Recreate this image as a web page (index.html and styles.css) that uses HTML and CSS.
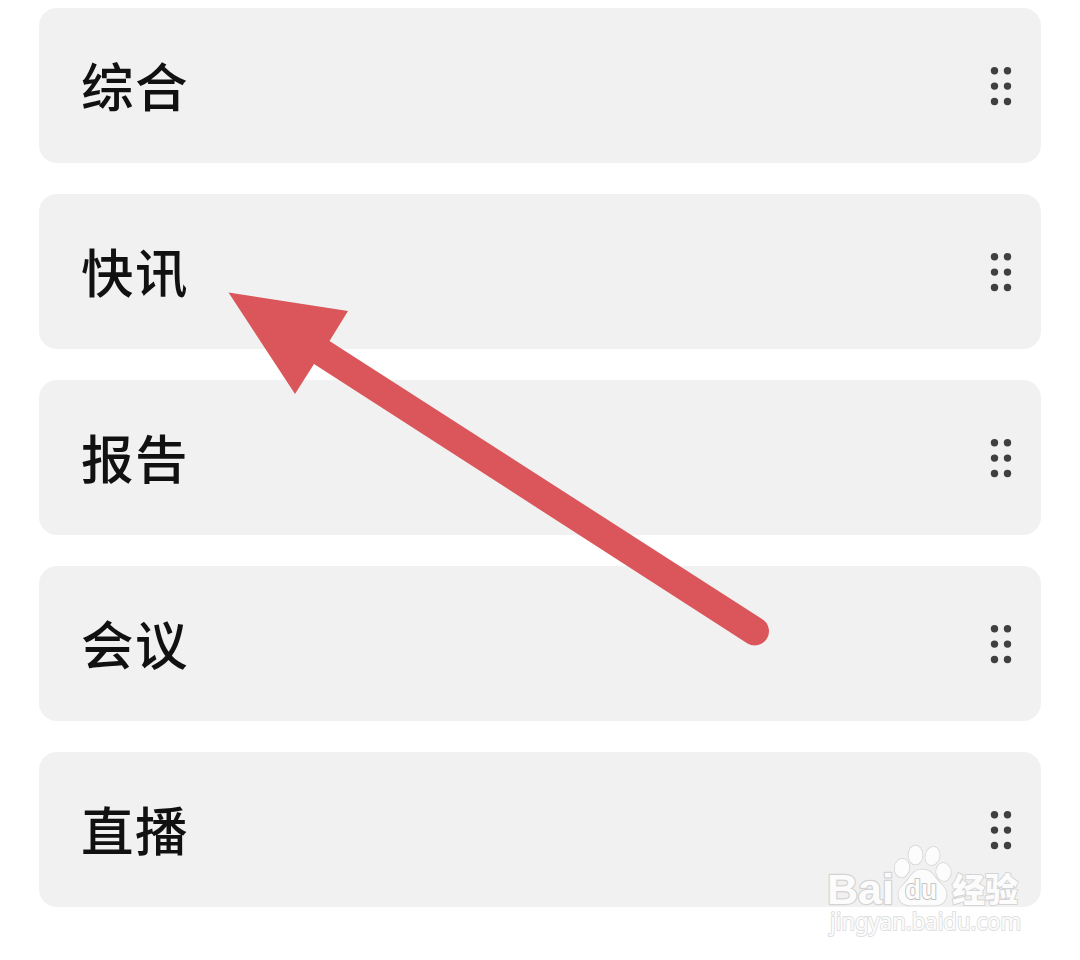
FILE: index.html
```html
<!DOCTYPE html>
<html lang="zh-CN">
<head>
<meta charset="utf-8">
<title>栏目排序</title>
<link rel="stylesheet" href="styles.css">
</head>
<body>
<svg width="0" height="0" class="defs" aria-hidden="true">
  <symbol id="grip" viewBox="0 0 22 40">
    <circle cx="4.500" cy="4.700" r="3.700"/><circle cx="17.500" cy="4.700" r="3.700"/>
    <circle cx="4.500" cy="20.100" r="3.700"/><circle cx="17.500" cy="20.100" r="3.700"/>
    <circle cx="4.500" cy="35.500" r="3.700"/><circle cx="17.500" cy="35.500" r="3.700"/>
  </symbol>
</svg>
<main class="list">
  <div class="card"><span class="label">综合</span><svg class="handle"><use href="#grip"/></svg></div>
  <div class="card"><span class="label">快讯</span><svg class="handle"><use href="#grip"/></svg></div>
  <div class="card"><span class="label">报告</span><svg class="handle"><use href="#grip"/></svg></div>
  <div class="card"><span class="label">会议</span><svg class="handle"><use href="#grip"/></svg></div>
  <div class="card"><span class="label">直播</span><svg class="handle"><use href="#grip"/></svg></div>
</main>
<svg class="arrow" viewBox="0 0 1080 960" aria-hidden="true">
  <path d="M228.500 292.500 L348 311 L329.500 341 L762 619 A14 14 0 0 1 747.500 643.500 L314 364 L295 394 Z"/>
</svg>
<svg class="watermark" viewBox="815 835 220 110" aria-hidden="true">
  <text class="brand" x="827" y="904" textLength="67" lengthAdjust="spacingAndGlyphs">Bai</text>
  <g class="paw">
    <ellipse cx="902" cy="868" rx="7.300" ry="9.300" transform="rotate(8 902 868)"/>
    <ellipse cx="915.500" cy="855" rx="7" ry="9.500"/>
    <ellipse cx="932.500" cy="856" rx="7" ry="9.300" transform="rotate(14 932.500 856)"/>
    <ellipse cx="943.500" cy="872" rx="7.300" ry="9" transform="rotate(-8 943.500 872)"/>
    <path d="M922 869.500 C915 869.500 912 874 908.500 879 C905 884 898.500 887 898.500 895 C898.500 902 904 905.500 911 905.500 L934 905.500 C942 905.500 946.500 901 946.500 894 C946.500 887 940 884 936.500 879 C933 874 930 869.500 922 869.500 Z"/>
  </g>
  <text class="du" x="905" y="899" textLength="32" lengthAdjust="spacingAndGlyphs">du</text>
  <text class="exp" x="952" y="902" textLength="66" lengthAdjust="spacingAndGlyphs">经验</text>
  <text class="url" x="830" y="930" textLength="191" lengthAdjust="spacingAndGlyphs">jingyan.baidu.com</text>
</svg>
</body>
</html>
```
FILE: styles.css
```css
body {
  margin: 0;
  position: relative;
  width: 1080px;
  height: 960px;
  overflow: hidden;
  background: #fff;
  font-family: "Noto Sans CJK SC", sans-serif;
}
.defs {
  display: none;
}
.list {
  display: flex;
  flex-direction: column;
  gap: 31px;
  padding: 8px 39px 0;
}
.card {
  box-sizing: border-box;
  display: flex;
  align-items: center;
  justify-content: space-between;
  height: 155px;
  padding: 0 29px 0 42px;
  border-radius: 18px;
  background: #f1f1f1;
}
.label {
  padding-bottom: 3px;
  font-size: 52.500px;
  line-height: 80px;
  letter-spacing: 1.500px;
  font-weight: 500;
  color: #111;
}
.handle {
  width: 22px;
  height: 40px;
  fill: #404040;
}
.arrow {
  position: absolute;
  inset: 0;
  width: 1080px;
  height: 960px;
  fill: #db565b;
}
.watermark {
  position: absolute;
  left: 815px;
  top: 835px;
  width: 220px;
  height: 110px;
  fill: #fcfcfc;
  stroke: #d4d4d4;
  stroke-width: 2px;
  stroke-linejoin: round;
  paint-order: stroke;
}
.paw {
  stroke-width: 1.500px;
}
.brand {
  font: bold 43px "Liberation Sans", sans-serif;
  stroke-width: 2.500px;
}
.du {
  font: bold 27px "Liberation Sans", sans-serif;
  stroke: #c4c4c4;
}
.exp {
  font: 900 33px "Noto Sans CJK SC", sans-serif;
}
.url {
  font: 23px "Noto Sans", sans-serif;
  stroke: #dfdfdf;
}
```
